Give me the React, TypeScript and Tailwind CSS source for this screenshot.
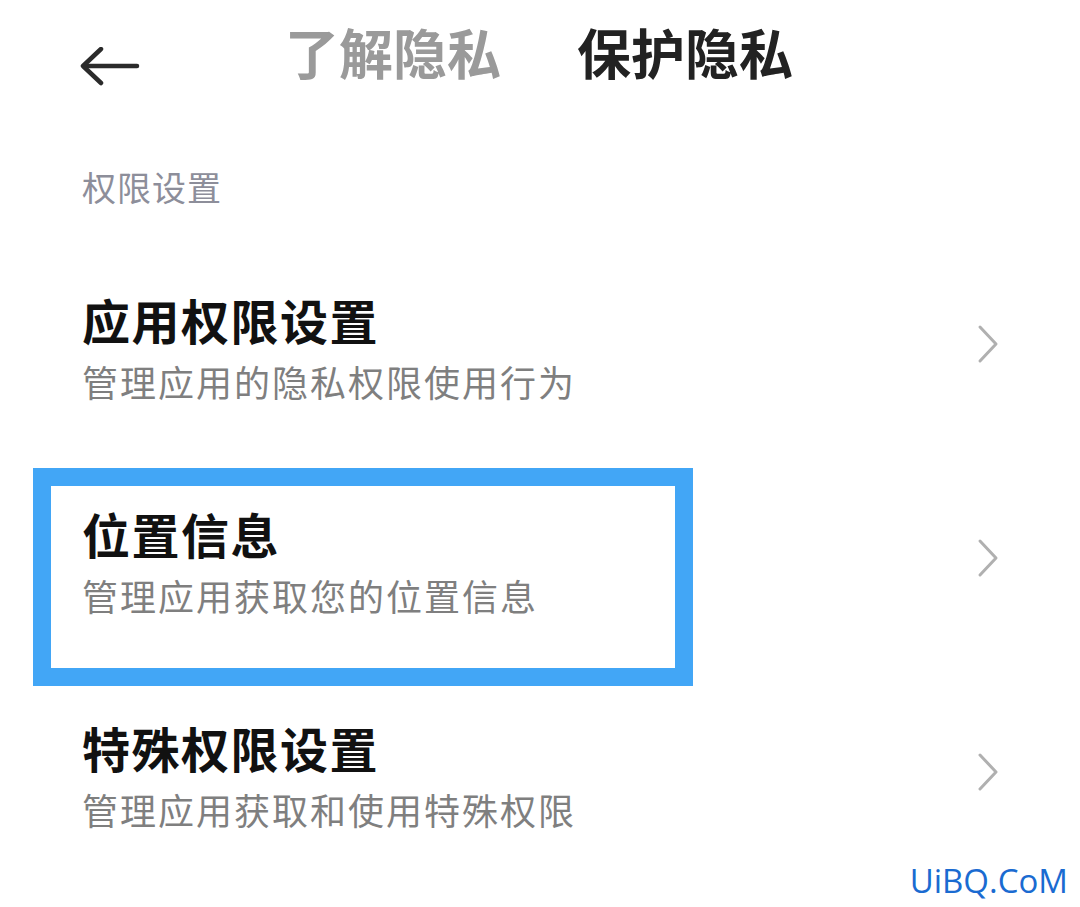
import React from 'react';

interface RowProps {
  title: string;
  desc: string;
  highlight?: boolean;
}

const cjk = { fontFamily: '"Noto Sans CJK SC", "Noto Sans", sans-serif' };

const Chevron = () => (
  <svg width="24" height="40" viewBox="0 0 24 40" className="-mt-[6px] shrink-0">
    <polyline points="4,3 20,20 4,37" fill="none" stroke="#b0b0b0" strokeWidth="3" strokeLinecap="round" strokeLinejoin="round" />
  </svg>
);

const Row = ({ title, desc, highlight }: RowProps) => (
  <div className="relative flex items-center justify-between h-[214px] pl-[82px] pr-[80px]">
    <div className="flex flex-col gap-[12px]">
      <div className="text-[48px] leading-[56px] font-bold text-[#111111] tracking-[1.5px]">{title}</div>
      <div className="text-[36px] leading-[44px] text-[#7f7f7f] tracking-[2px]">{desc}</div>
    </div>
    <Chevron />

    {/* annotation box drawn over the screenshot */}
    {highlight && (
      <div className="absolute z-10 left-[33px] top-[14px] w-[660px] h-[218px] border-[18px] border-[#42a6f6] pointer-events-none" />
    )}
  </div>
);

export default function App() {
  return (
    <div className="relative w-[1080px] h-[907px] bg-white overflow-hidden" style={cjk}>
      {/* header */}
      <div className="flex items-start pt-[20px] pl-[80px] h-[84px]">
        <svg width="60" height="40" viewBox="0 0 60 40" className="mt-[27px] shrink-0">
          <path d="M57 19 H4" fill="none" stroke="#2b2b2b" strokeWidth="4.5" strokeLinecap="round" />
          <path d="M21 2 L3 19 L21 36" fill="none" stroke="#2b2b2b" strokeWidth="4.5" strokeLinecap="round" strokeLinejoin="round" />
        </svg>
        <div className="ml-[145px] text-[54px] leading-[64px] font-bold text-[#9a9a9a]">了解隐私</div>
        <div className="ml-[76px] text-[54px] leading-[64px] font-bold text-[#222222]">保护隐私</div>
      </div>

      <div className="mt-[83px] pl-[82px] text-[34px] leading-[40px] text-[#8d8e9a] tracking-[1px]">权限设置</div>

      <div className="mt-[33px]">
        <Row title="应用权限设置" desc="管理应用的隐私权限使用行为" />
        <Row title="位置信息" desc="管理应用获取您的位置信息" highlight />
        <Row title="特殊权限设置" desc="管理应用获取和使用特殊权限" />
      </div>

      <div
        className="absolute right-[12px] bottom-[6px] text-[33px] leading-[40px] text-[#1a6bd1]"
        style={{ fontFamily: '"Open Sans", "Noto Sans", sans-serif' }}
      >
        UiBQ.CoM
      </div>
    </div>
  );
}
